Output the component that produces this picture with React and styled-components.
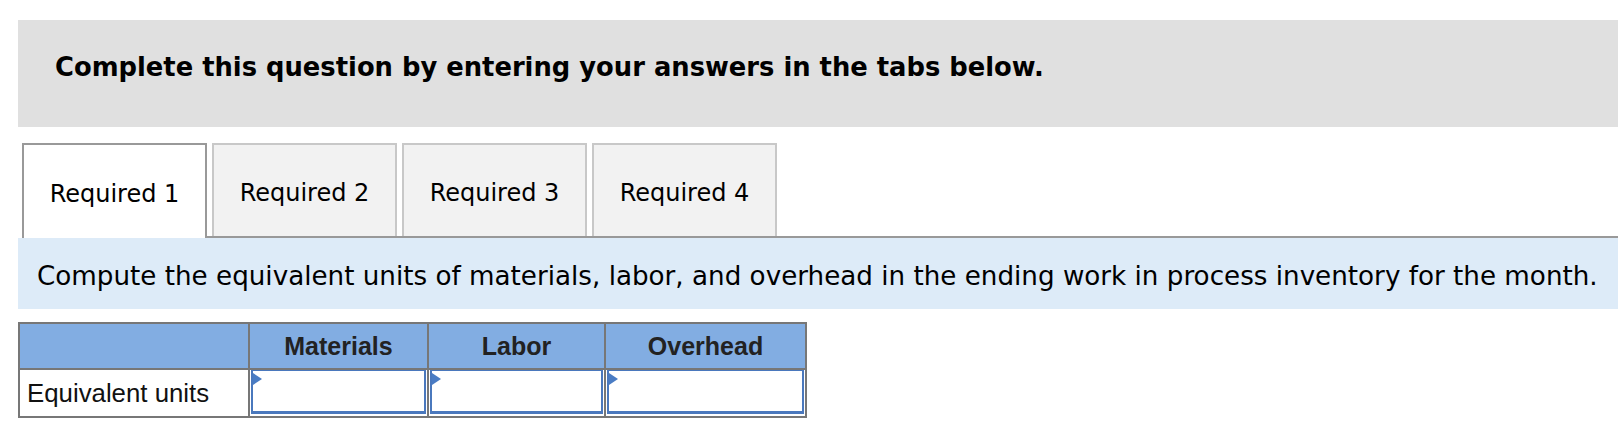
import React, { useState } from "react";
import styled, { createGlobalStyle } from "styled-components";

// ============================================= global
const GlobalStyle = createGlobalStyle`
  body {
    margin: 0;
    background: #fff;
    font-family: "DejaVu Sans", Verdana, sans-serif;
    color: #000;
  }
`;

//============================================== styled-components
const Page = styled.div`
  padding: 20px 0 0 18px;
`;

const Banner = styled.div`
  height: 107px;
  box-sizing: border-box;
  background-color: #e0e0e0;
  padding: 32px 0 0 37px;
  font-weight: bold;
  font-size: 25.8px;
  line-height: 30px;
`;

const TabBar = styled.div`
  display: flex;
  gap: 5px;
  margin: 16px 0 0 4px;
  border-bottom: 2px solid #999;
`;

const Tab = styled.button`
  width: 185px;
  box-sizing: border-box;
  font-family: "DejaVu Sans", Verdana, sans-serif;
  font-size: 24px;
  color: #000;
  cursor: pointer;
  padding: 4px 0 0;
  border: 2px solid ${(p) => (p.$active ? "#999" : "#c8c8c8")};
  border-bottom: none;
  background-color: ${(p) => (p.$active ? "#fff" : "#f2f2f2")};
  height: ${(p) => (p.$active ? "95px" : "93px")};
  margin-bottom: ${(p) => (p.$active ? "-2px" : "0")};
`;

const Prompt = styled.div`
  height: 71px;
  background-color: #ddebf8;
  display: flex;
  align-items: center;
  padding: 4px 0 0 19px;
  box-sizing: border-box;
  font-size: 26.2px;
`;

const Grid = styled.table`
  margin-top: 13px;
  border-collapse: collapse;
  font-family: "Liberation Sans", Arial, sans-serif;
`;

const HeadCell = styled.th`
  background-color: #82ade2;
  border: 2px solid #777;
  height: 44px;
  width: ${(p) => p.$w}px;
  padding: 0;
  font-size: 25px;
  font-weight: bold;
  color: #222;
`;

const LabelCell = styled.td`
  border: 2px solid #777;
  height: 45px;
  padding: 0 0 0 7px;
  font-size: 25.8px;
  color: #111;
  text-align: left;
`;

const InputCell = styled.td`
  border: 2px solid #777;
  padding: 0 1px 1px 1px;
  height: 45px;
  position: relative;
  vertical-align: top;
`;

const Field = styled.input`
  display: block;
  width: 100%;
  height: 44px;
  box-sizing: border-box;
  border: 2px solid #4a78bd;
  border-top-width: 1px;
  border-bottom-width: 3px;
  outline: none;
  background: #fff;
  font-size: 20px;
`;

const Marker = styled.span`
  position: absolute;
  top: 3px;
  left: 3px;
  width: 0;
  height: 0;
  border-top: 6px solid transparent;
  border-bottom: 6px solid transparent;
  border-left: 9px solid #4a7cc4;
`;

const tabs = ["Required 1", "Required 2", "Required 3", "Required 4"];
const columns = [
  { name: "", w: 228 },
  { name: "Materials", w: 177 },
  { name: "Labor", w: 175 },
  { name: "Overhead", w: 199 },
];

export default () => {
  const [active, setActive] = useState(0);

  return (
    <>
      <GlobalStyle />
      <Page>
        <Banner>Complete this question by entering your answers in the tabs below.</Banner>
        <TabBar>
          {tabs.map((t, i) => (
            <Tab key={t} $active={i === active} onClick={() => setActive(i)}>
              {t}
            </Tab>
          ))}
        </TabBar>
        <Prompt>
          Compute the equivalent units of materials, labor, and overhead in the ending work in process inventory for the month.
        </Prompt>
        <Grid>
          <thead>
            <tr>
              {columns.map((c) => (
                <HeadCell key={c.name || "blank"} $w={c.w}>
                  {c.name}
                </HeadCell>
              ))}
            </tr>
          </thead>
          <tbody>
            <tr>
              <LabelCell>Equivalent units</LabelCell>
              {columns.slice(1).map((c) => (
                <InputCell key={c.name}>
                  <Field type="text" />
                  <Marker />
                </InputCell>
              ))}
            </tr>
          </tbody>
        </Grid>
      </Page>
    </>
  );
};
